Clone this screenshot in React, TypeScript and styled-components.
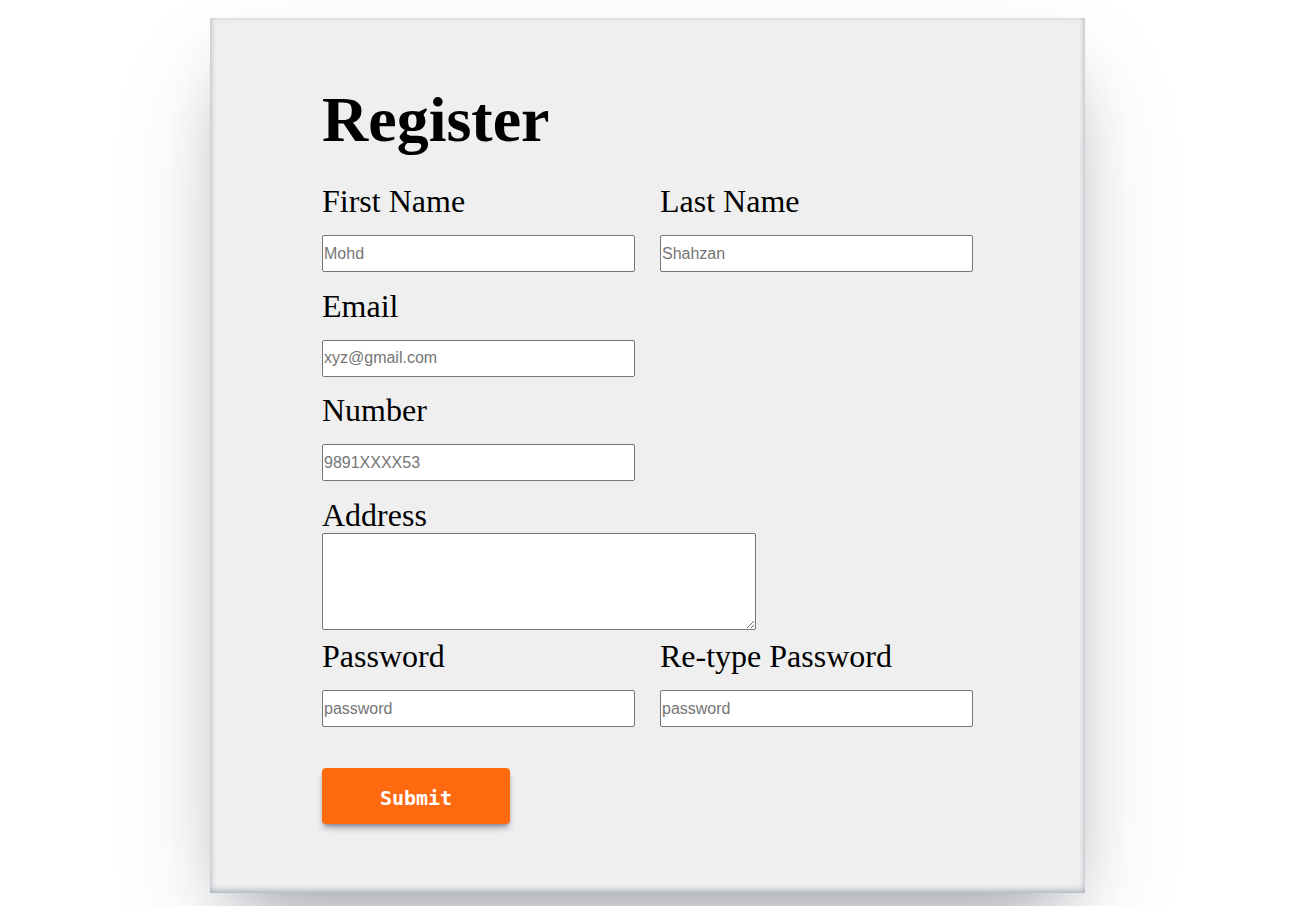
import styled, { createGlobalStyle } from "styled-components";

const GlobalStyle = createGlobalStyle`
  html, body {
    margin: 0;
    background: #ffffff;
  }
  body {
    font-family: "Liberation Serif", "Times New Roman", serif;
    color: #000;
  }
`;

const Page = styled.div`
  padding: 17.5px 0 40px 210px;
`;

const Card = styled.form`
  box-sizing: border-box;
  width: 875px;
  height: 875px;
  padding: 65.5px 0 0 112px;
  background: #efefef;
  box-shadow: rgba(50, 50, 93, 0.25) 0px 50px 100px -20px,
    rgba(0, 0, 0, 0.3) 0px 30px 60px -30px,
    rgba(10, 37, 64, 0.35) 0px -2px 6px 0px inset;
`;

const Title = styled.h1`
  margin: 0 0 25.4px;
  font-size: 64px;
  line-height: 74px;
  font-weight: bold;
`;

const Row = styled.div<{ $gap?: number }>`
  display: grid;
  grid-template-columns: 313px 313px;
  column-gap: 25px;
  margin-bottom: ${(p) => (p.$gap ?? 14.5)}px;
`;

const Field = styled.div`
  display: flex;
  flex-direction: column;
  align-items: flex-start;
`;

const Label = styled.label<{ $tight?: boolean }>`
  display: block;
  font-size: 32px;
  line-height: 37px;
  padding-top: 1px;
  margin-bottom: ${(p) => (p.$tight ? -1 : 15)}px;
`;

const Input = styled.input`
  box-sizing: border-box;
  width: 313px;
  height: 37px;
  padding: 0 1px;
  border: 1px solid #767676;
  border-radius: 2px;
  background: #fff;
  font-family: "Liberation Sans", Arial, sans-serif;
  font-size: 16px;
  &::placeholder {
    color: #757575;
  }
`;

const TextArea = styled.textarea`
  box-sizing: border-box;
  display: block;
  width: 434px;
  height: 97px;
  border: 1px solid #767676;
  border-radius: 2px;
  background: #fff;
  font-family: "Liberation Mono", monospace;
  font-size: 13px;
  margin-bottom: 7.5px;
`;

const SubmitButton = styled.button`
  margin-top: 41px;
  width: 188px;
  height: 56px;
  padding: 3px 0 0;
  border: none;
  border-radius: 4px;
  background: #ff6a10;
  color: #fff;
  font-family: "DejaVu Sans Mono", "Liberation Mono", monospace;
  font-size: 20px;
  font-weight: bold;
  cursor: pointer;
  box-shadow: rgba(50, 50, 93, 0.45) 0px 5px 7px -2px,
    rgba(0, 0, 0, 0.3) 0px 3px 5px -2px;
`;

export default function App() {
  return (
    <>
      <GlobalStyle />
      <Page>
        <Card onSubmit={(e) => e.preventDefault()}>
          <Title>Register</Title>
          <Row>
            <Field>
              <Label>First Name</Label>
              <Input placeholder="Mohd" />
            </Field>
            <Field>
              <Label>Last Name</Label>
              <Input placeholder="Shahzan" />
            </Field>
          </Row>
          <Row>
            <Field>
              <Label>Email</Label>
              <Input placeholder="xyz@gmail.com" />
            </Field>
          </Row>
          <Row>
            <Field>
              <Label>Number</Label>
              <Input placeholder="9891XXXX53" />
            </Field>
          </Row>
          <Field>
            <Label $tight>Address</Label>
            <TextArea />
          </Field>
          <Row $gap={0}>
            <Field>
              <Label>Password</Label>
              <Input type="password" placeholder="password" />
            </Field>
            <Field>
              <Label>Re-type Password</Label>
              <Input type="password" placeholder="password" />
            </Field>
          </Row>
          <SubmitButton type="submit">Submit</SubmitButton>
        </Card>
      </Page>
    </>
  );
}
